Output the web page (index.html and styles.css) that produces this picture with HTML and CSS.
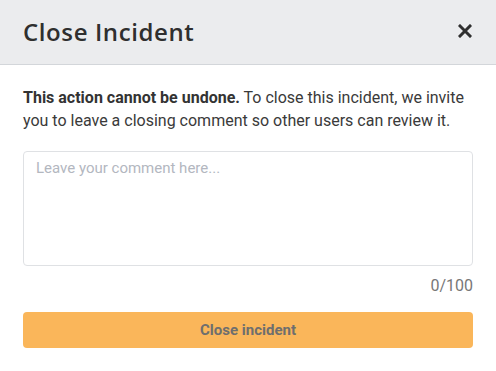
FILE: index.html
```html
<!DOCTYPE html>
<html>
<head>
    <title>Close Incident</title>
    <link rel="stylesheet" href="styles.css">
</head>
<body>
    <div class="modal">
        <div class="modal-header">
            <h2>Close Incident</h2>
            <button class="close-btn" aria-label="Close">
                <svg width="14" height="14" viewBox="0 0 14 14">
                    <path d="M2 2 L12 12 M12 2 L2 12" stroke="#2f2f2f" stroke-width="3" stroke-linecap="square"/>
                </svg>
            </button>
        </div>

        <div class="modal-body">
            <p class="intro"><b>This action cannot be undone.</b> To close this incident, we invite you to leave a closing comment so other users can review it.</p>

            <textarea class="comment" placeholder="Leave your comment here..."></textarea>
            <div class="counter">0/100</div>

            <button class="submit">Close incident</button>
        </div>
    </div>
</body>
</html>
```

FILE: styles.css
```css
body {
    margin: 0;
    background: #fff;
    font-family: Roboto, sans-serif;
    color: #333;
}
.modal {
    width: 496px;
    height: 371px;
    background: #fff;
}
.modal-header {
    display: flex;
    justify-content: space-between;
    align-items: center;
    height: 65px;
    padding: 0 24px 2px 23px;
    box-sizing: border-box;
    background: #ebecee;
    border-bottom: 1px solid #d3d6da;
}
.modal-header h2 {
    margin: 0;
    font-family: 'Open Sans', sans-serif;
    font-weight: 600;
    font-size: 24px;
    color: #2f2f2f;
    letter-spacing: 0.6px;
}
.close-btn {
    background: none;
    border: none;
    padding: 0;
    display: flex;
    cursor: pointer;
}
.modal-body {
    padding: 21px 23px;
}
.intro {
    margin: 0 0 19px;
    font-size: 16px;
    line-height: 23px;
    color: #3a3a3a;
}
.intro b {
    color: #333;
}
.comment {
    display: block;
    width: 100%;
    height: 115px;
    box-sizing: border-box;
    padding: 7px 12px;
    border: 1px solid #dfe1e4;
    border-radius: 4px;
    font-family: Roboto, sans-serif;
    font-size: 15px;
    resize: none;
    outline: none;
}
.comment::placeholder {
    color: #b3b7bf;
}
.counter {
    text-align: right;
    font-size: 16px;
    color: #777;
    margin-top: 10px;
    line-height: 20px;
}
.submit {
    display: block;
    width: 100%;
    height: 36px;
    margin-top: 16px;
    background: #fab65a;
    border: none;
    border-radius: 4px;
    font-family: Roboto, sans-serif;
    font-weight: 700;
    font-size: 15px;
    color: #6e6e6e;
    cursor: pointer;
}
```
